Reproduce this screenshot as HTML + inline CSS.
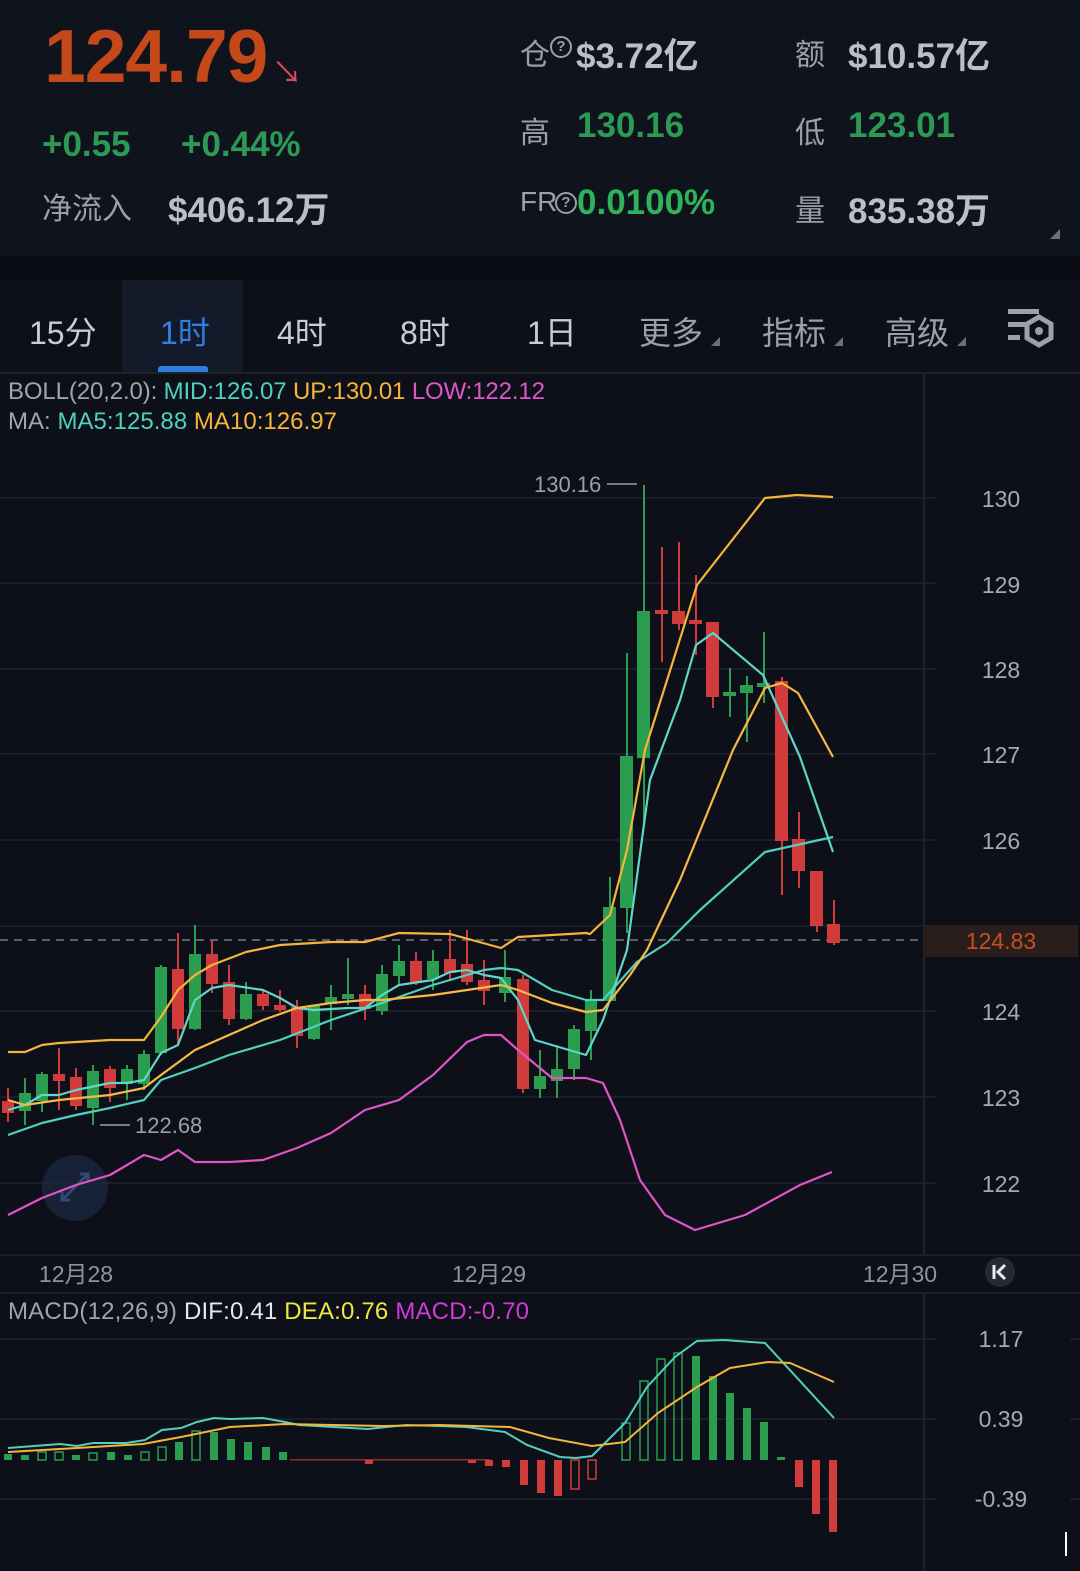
<!DOCTYPE html>
<html><head><meta charset="utf-8"><style>
*{margin:0;padding:0;box-sizing:border-box}
body{width:1080px;height:1571px;background:#0d1018;overflow:hidden;font-family:"Liberation Sans","Noto Sans CJK SC",sans-serif;position:relative}
.a{position:absolute;white-space:nowrap}
.b{font-weight:bold}
.g{color:#2c9a55}
.l{color:#9aa0aa}
.w{color:#b9c0cc}
</style></head><body>
<div class="a" style="left:0;top:0;width:1080px;height:256px;background:#0f131c"></div>
<div class="a" style="left:0;top:256px;width:1080px;height:24px;background:#0a0d13"></div>
<div class="a b" style="left:44px;top:13px;font-size:75px;color:#c4481a;letter-spacing:-1px">124.79</div>
<div class="a" style="left:272px;top:48px;font-size:30px;color:#d84a5a">↘</div>
<div class="a b g" style="left:42px;top:125px;font-size:35px">+0.55</div>
<div class="a b g" style="left:181px;top:125px;font-size:35px">+0.44%</div>
<div class="a l" style="left:42px;top:184px;font-size:30px">净流入</div>
<div class="a b w" style="left:168px;top:182px;font-size:35px">$406.12万</div>

<div class="a l" style="left:520px;top:30px;font-size:30px">仓</div>
<div class="a l" style="left:550px;top:36px;width:22px;height:22px;border:2px solid #9aa0aa;border-radius:50%;font-size:15px;text-align:center;line-height:18px;font-weight:bold">?</div>
<div class="a b w" style="left:576px;top:28px;font-size:35px">$3.72亿</div>
<div class="a l" style="left:795px;top:30px;font-size:30px">额</div>
<div class="a b w" style="left:848px;top:28px;font-size:35px">$10.57亿</div>
<div class="a l" style="left:520px;top:108px;font-size:30px">高</div>
<div class="a b g" style="left:577px;top:106px;font-size:35px">130.16</div>
<div class="a l" style="left:795px;top:108px;font-size:30px">低</div>
<div class="a b g" style="left:848px;top:106px;font-size:35px">123.01</div>
<div class="a l" style="left:520px;top:186px;font-size:28px">FR</div>
<div class="a l" style="left:555px;top:192px;width:22px;height:22px;border:2px solid #9aa0aa;border-radius:50%;font-size:15px;text-align:center;line-height:18px;font-weight:bold">?</div>
<div class="a b" style="left:577px;top:183px;font-size:35px;color:#2fb35a">0.0100%</div>
<div class="a l" style="left:795px;top:186px;font-size:30px">量</div>
<div class="a b w" style="left:848px;top:183px;font-size:35px">835.38万</div>
<div class="a" style="left:1050px;top:229px;width:0;height:0;border-left:10px solid transparent;border-bottom:10px solid #6a707a"></div>

<div class="a" style="left:122px;top:280px;width:121px;height:92px;background:#131b2a"></div>
<div class="a" style="left:158px;top:366px;width:50px;height:6px;background:#2f7ee0;border-radius:3px 3px 0 0"></div>
<div class="a" style="left:29px;top:308px;font-size:32px;color:#c8ccd3">15分</div>
<div class="a" style="left:160px;top:308px;font-size:32px;color:#2f7ee0">1时</div>
<div class="a" style="left:277px;top:308px;font-size:32px;color:#c8ccd3">4时</div>
<div class="a" style="left:400px;top:308px;font-size:32px;color:#c8ccd3">8时</div>
<div class="a" style="left:527px;top:308px;font-size:32px;color:#c8ccd3">1日</div>
<div class="a" style="left:639px;top:308px;font-size:32px;color:#9aa0aa">更多</div>
<div class="a" style="left:762px;top:308px;font-size:32px;color:#9aa0aa">指标</div>
<div class="a" style="left:885px;top:308px;font-size:32px;color:#9aa0aa">高级</div>
<div class="a" style="left:711px;top:337px;border-left:9px solid transparent;border-bottom:9px solid #6a707a"></div>
<div class="a" style="left:834px;top:337px;border-left:9px solid transparent;border-bottom:9px solid #6a707a"></div>
<div class="a" style="left:957px;top:337px;border-left:9px solid transparent;border-bottom:9px solid #6a707a"></div>
<svg class="a" style="left:0;top:0" width="1080" height="1571">
<g fill="#9aa1ad"><rect x="1008" y="309" width="31" height="5"/><rect x="1008" y="322" width="17" height="5"/><rect x="1008" y="335" width="12" height="5"/></g>
<polygon points="1039,317 1051,324 1051,338 1039,345 1027,338 1027,324" fill="none" stroke="#9aa1ad" stroke-width="5"/>
<circle cx="1039" cy="331" r="4" fill="#9aa1ad"/>
<line x1="0" y1="373" x2="1080" y2="373" stroke="#1c212b" stroke-width="2"/>
<line x1="924" y1="373" x2="924" y2="1255" stroke="#1c212b" stroke-width="2"/>
<line x1="924" y1="1293" x2="924" y2="1571" stroke="#1c212b" stroke-width="2"/>
<g stroke="#1e232d" stroke-width="1.5">
<line x1="0" y1="498" x2="936" y2="498"/><line x1="0" y1="583" x2="936" y2="583"/><line x1="0" y1="669" x2="936" y2="669"/><line x1="0" y1="754" x2="936" y2="754"/><line x1="0" y1="840" x2="936" y2="840"/><line x1="0" y1="926" x2="936" y2="926"/><line x1="0" y1="1011" x2="936" y2="1011"/><line x1="0" y1="1097" x2="936" y2="1097"/><line x1="0" y1="1183" x2="936" y2="1183"/>
<line x1="0" y1="1255" x2="1080" y2="1255"/><line x1="0" y1="1293" x2="1080" y2="1293"/>
<line x1="0" y1="1339" x2="936" y2="1339"/><line x1="0" y1="1419" x2="936" y2="1419"/><line x1="0" y1="1499" x2="936" y2="1499"/>
<line x1="1070" y1="1339" x2="1080" y2="1339"/><line x1="1070" y1="1419" x2="1080" y2="1419"/><line x1="1070" y1="1499" x2="1080" y2="1499"/>
</g>
<line x1="0" y1="940" x2="924" y2="940" stroke="#5a5f68" stroke-width="2" stroke-dasharray="8,6"/>
<g font-family="Liberation Sans,sans-serif" font-size="23" fill="#a5aab3" text-anchor="middle">
<text x="1001" y="507">130</text><text x="1001" y="593">129</text><text x="1001" y="678">128</text><text x="1001" y="763">127</text><text x="1001" y="849">126</text><text x="1001" y="1020">124</text><text x="1001" y="1106">123</text><text x="1001" y="1192">122</text>
<text x="1001" y="1347">1.17</text><text x="1001" y="1427">0.39</text><text x="1001" y="1507">-0.39</text>
</g>
<rect x="924" y="925" width="154" height="32" fill="#2a1e1c"/>
<text x="1001" y="949" font-family="Liberation Sans,sans-serif" font-size="23" fill="#c4501f" text-anchor="middle">124.83</text>
<g font-family="Liberation Sans,Noto Sans CJK SC,sans-serif" font-size="23" fill="#8e949e" text-anchor="middle">
<text x="76" y="1282">12月28</text><text x="489" y="1282">12月29</text><text x="900" y="1282">12月30</text></g>
<circle cx="1000" cy="1272" r="15" fill="#252a35"/>
<path d="M994 1265v14M1005 1265l-7 7 7 7" stroke="#e8eaee" stroke-width="3" fill="none"/>
<text x="534" y="492" font-family="Liberation Sans,sans-serif" font-size="22" fill="#9aa0aa">130.16</text>
<line x1="607" y1="484" x2="637" y2="484" stroke="#9aa0aa" stroke-width="1.5"/>
<text x="135" y="1133" font-family="Liberation Sans,sans-serif" font-size="22" fill="#9aa0aa">122.68</text>
<line x1="100" y1="1125" x2="130" y2="1125" stroke="#9aa0aa" stroke-width="1.5"/>
<circle cx="75" cy="1188" r="33" fill="#1b2740" opacity="0.8"/>
<path d="M62 1200l26-26M80 1174h8v8M70 1200h-8v-8" stroke="#2d4a78" stroke-width="3" fill="none"/>

<g stroke="#d23b3b" fill="#d23b3b" stroke-width="2">
<line x1="8" y1="1088" x2="8" y2="1122"/><rect x="3" y="1102" width="10" height="10"/>
<line x1="59" y1="1048" x2="59" y2="1110"/><rect x="54" y="1075" width="10" height="5"/>
<line x1="76" y1="1068" x2="76" y2="1110"/><rect x="71" y="1078" width="10" height="27"/>
<line x1="110" y1="1066" x2="110" y2="1102"/><rect x="105" y="1070" width="10" height="17"/>
<line x1="178" y1="933" x2="178" y2="1045"/><rect x="173" y="970" width="10" height="58"/>
<line x1="212" y1="940" x2="212" y2="993"/><rect x="207" y="955" width="10" height="28"/>
<line x1="229" y1="965" x2="229" y2="1025"/><rect x="224" y="983" width="10" height="35"/>
<line x1="263" y1="990" x2="263" y2="1010"/><rect x="258" y="995" width="10" height="10"/>
<line x1="280" y1="990" x2="280" y2="1012"/><rect x="275" y="1006" width="10" height="3"/>
<line x1="297" y1="1000" x2="297" y2="1048"/><rect x="292" y="1008" width="10" height="27"/>
<line x1="365" y1="985" x2="365" y2="1020"/><rect x="360" y="995" width="10" height="13"/>
<line x1="416" y1="952" x2="416" y2="985"/><rect x="411" y="962" width="10" height="20"/>
<line x1="450" y1="930" x2="450" y2="980"/><rect x="445" y="960" width="10" height="12"/>
<line x1="467" y1="930" x2="467" y2="985"/><rect x="462" y="965" width="10" height="16"/>
<line x1="484" y1="960" x2="484" y2="1005"/><rect x="479" y="981" width="10" height="9"/>
<line x1="523" y1="975" x2="523" y2="1093"/><rect x="518" y="980" width="10" height="108"/>
<line x1="662" y1="547" x2="662" y2="662"/><rect x="656" y="611" width="11" height="2"/>
<line x1="679" y1="542" x2="679" y2="630"/><rect x="673" y="612" width="11" height="11"/>
<line x1="696" y1="575" x2="696" y2="655"/><rect x="690" y="621" width="11" height="2"/>
<line x1="713" y1="623" x2="713" y2="708"/><rect x="707" y="623" width="11" height="73"/>
<line x1="782" y1="677" x2="782" y2="895"/><rect x="776" y="682" width="11" height="158"/>
<line x1="799" y1="812" x2="799" y2="888"/><rect x="793" y="840" width="11" height="30"/>
<line x1="817" y1="872" x2="817" y2="932"/><rect x="811" y="872" width="11" height="53"/>
<line x1="834" y1="900" x2="834" y2="945"/><rect x="828" y="925" width="11" height="17"/>
</g>
<g stroke="#2a9d4e" fill="#2a9d4e" stroke-width="2">
<line x1="25" y1="1078" x2="25" y2="1125"/><rect x="20" y="1094" width="10" height="16"/>
<line x1="42" y1="1072" x2="42" y2="1112"/><rect x="37" y="1075" width="10" height="25"/>
<line x1="93" y1="1065" x2="93" y2="1125"/><rect x="88" y="1072" width="10" height="35"/>
<line x1="127" y1="1065" x2="127" y2="1100"/><rect x="122" y="1070" width="10" height="13"/>
<line x1="144" y1="1050" x2="144" y2="1090"/><rect x="139" y="1055" width="10" height="28"/>
<line x1="161" y1="965" x2="161" y2="1055"/><rect x="156" y="968" width="10" height="84"/>
<line x1="195" y1="925" x2="195" y2="1030"/><rect x="190" y="955" width="10" height="73"/>
<line x1="246" y1="982" x2="246" y2="1020"/><rect x="241" y="995" width="10" height="23"/>
<line x1="314" y1="1005" x2="314" y2="1040"/><rect x="309" y="1007" width="10" height="31"/>
<line x1="331" y1="985" x2="331" y2="1030"/><rect x="326" y="998" width="10" height="5"/>
<line x1="348" y1="958" x2="348" y2="1005"/><rect x="343" y="995" width="10" height="3"/>
<line x1="382" y1="965" x2="382" y2="1015"/><rect x="377" y="975" width="10" height="35"/>
<line x1="399" y1="945" x2="399" y2="985"/><rect x="394" y="962" width="10" height="13"/>
<line x1="433" y1="950" x2="433" y2="990"/><rect x="428" y="962" width="10" height="16"/>
<line x1="505" y1="950" x2="505" y2="1002"/><rect x="500" y="978" width="10" height="14"/>
<line x1="540" y1="1050" x2="540" y2="1098"/><rect x="535" y="1077" width="10" height="11"/>
<line x1="557" y1="1047" x2="557" y2="1098"/><rect x="552" y="1070" width="10" height="10"/>
<line x1="574" y1="1025" x2="574" y2="1080"/><rect x="569" y="1030" width="10" height="38"/>
<line x1="591" y1="990" x2="591" y2="1060"/><rect x="586" y="1000" width="10" height="30"/>
<line x1="610" y1="877" x2="610" y2="1002"/><rect x="604" y="908" width="11" height="92"/>
<line x1="627" y1="653" x2="627" y2="933"/><rect x="621" y="757" width="11" height="150"/>
<line x1="644" y1="485" x2="644" y2="826"/><rect x="638" y="612" width="11" height="145"/>
<line x1="730" y1="668" x2="730" y2="717"/><rect x="724" y="693" width="11" height="2"/>
<line x1="747" y1="676" x2="747" y2="742"/><rect x="741" y="686" width="11" height="6"/>
<line x1="764" y1="632" x2="764" y2="703"/><rect x="758" y="684" width="11" height="2"/>
</g>
<g fill="none" stroke-width="2.2" stroke-linejoin="round">
<polyline stroke="#f5b53a" points="8,1052 25,1052 42,1045 59,1043 110,1040 144,1040 161,1017 178,990 195,975 212,965 246,952 280,945 331,942 365,942 399,933 450,934 501,948 518,937 586,933 590,934 610,915 627,850 645,750 697,585 765,498 797,495 833,497"/>
<polyline stroke="#4fd1c0" points="8,1135 42,1123 76,1115 110,1108 144,1100 161,1080 195,1068 229,1055 280,1040 331,1020 382,1003 433,985 484,970 501,968 518,970 552,990 586,1000 603,1000 637,962 667,943 700,910 765,852 833,837"/>
<polyline stroke="#e055c8" points="8,1215 42,1198 76,1185 110,1175 144,1155 161,1160 178,1150 195,1162 229,1162 263,1160 297,1148 331,1133 365,1110 399,1100 433,1075 467,1042 484,1035 501,1035 518,1050 552,1078 586,1078 603,1083 620,1120 640,1180 665,1215 695,1230 745,1215 800,1185 832,1172"/>
<polyline stroke="#5fd6c8" points="8,1110 25,1105 42,1095 59,1095 76,1090 110,1083 127,1083 144,1080 161,1053 178,1045 195,1000 212,988 229,985 263,990 280,998 297,1008 314,1010 348,1008 365,1008 382,995 399,985 433,980 450,972 467,970 484,975 501,978 518,1000 535,1040 552,1045 569,1050 586,1055 603,1020 627,950 650,780 680,700 696,645 713,633 763,675 800,757 833,852"/>
<polyline stroke="#f7b945" points="8,1100 25,1105 59,1100 110,1095 144,1088 161,1075 195,1050 229,1035 263,1020 297,1008 331,1003 365,1000 382,1000 433,995 467,990 501,985 518,990 552,1003 586,1012 603,1010 630,975 647,950 680,880 733,750 765,688 782,683 798,693 833,757"/>
</g>
<g font-family="Liberation Sans,sans-serif" font-size="24">
<text x="8" y="399" fill="#a0a4ac" textLength="537">BOLL(20,2.0): <tspan fill="#4fd1c0">MID:126.07</tspan> <tspan fill="#f5b53a">UP:130.01</tspan> <tspan fill="#e055c8">LOW:122.12</tspan></text>
<text x="8" y="429" fill="#a0a4ac" textLength="329">MA: <tspan fill="#4fd1c0">MA5:125.88</tspan> <tspan fill="#f5b53a">MA10:126.97</tspan></text>
<text x="8" y="1319" fill="#a0a4ac" textLength="521">MACD(12,26,9) <tspan fill="#e6e8ec">DIF:0.41</tspan> <tspan fill="#f0e640">DEA:0.76</tspan> <tspan fill="#d23ad8">MACD:-0.70</tspan></text>
</g>
<g fill="#2a9d4e">
<rect x="4" y="1454" width="8" height="6"/><rect x="21" y="1455" width="8" height="5"/><rect x="72" y="1455" width="8" height="5"/><rect x="107" y="1452" width="8" height="8"/><rect x="124" y="1455" width="8" height="5"/>
<rect x="175" y="1442" width="8" height="18"/><rect x="210" y="1432" width="8" height="28"/><rect x="227" y="1439" width="8" height="21"/><rect x="244" y="1442" width="8" height="18"/><rect x="262" y="1447" width="8" height="13"/><rect x="279" y="1452" width="8" height="8"/>
<rect x="692" y="1356" width="8" height="104"/><rect x="709" y="1376" width="8" height="84"/><rect x="726" y="1393" width="8" height="67"/><rect x="743" y="1408" width="8" height="52"/><rect x="760" y="1422" width="8" height="38"/><rect x="777" y="1457" width="8" height="3"/>
</g>
<g fill="none" stroke="#2a9d4e" stroke-width="1.5">
<rect x="38" y="1452" width="8" height="8"/><rect x="55" y="1452" width="8" height="8"/><rect x="89" y="1453" width="8" height="7"/><rect x="141" y="1452" width="8" height="8"/><rect x="158" y="1447" width="8" height="13"/><rect x="192" y="1431" width="8" height="29"/>
<rect x="622" y="1423" width="8" height="37"/><rect x="640" y="1381" width="8" height="79"/><rect x="657" y="1359" width="8" height="101"/><rect x="674" y="1353" width="8" height="107"/>
</g>
<g fill="#d23b3b">
<rect x="290" y="1459" width="200" height="1.5" opacity="0.7"/><rect x="365" y="1460" width="8" height="4"/><rect x="468" y="1460" width="8" height="3"/><rect x="485" y="1460" width="8" height="6"/><rect x="502" y="1460" width="8" height="7"/>
<rect x="520" y="1460" width="8" height="25"/><rect x="537" y="1460" width="8" height="33"/><rect x="554" y="1460" width="8" height="36"/>
<rect x="795" y="1460" width="8" height="27"/><rect x="812" y="1460" width="8" height="54"/><rect x="829" y="1460" width="8" height="72"/>
</g>
<g fill="none" stroke="#d23b3b" stroke-width="1.5"><rect x="571" y="1460" width="8" height="29"/><rect x="588" y="1460" width="8" height="19"/></g>
<g fill="none" stroke-width="2">
<polyline stroke="#4fd1c0" points="8,1448 60,1444 77,1446 93,1443 126,1443 145,1440 162,1430 181,1428 197,1422 214,1418 230,1419 263,1418 285,1422 299,1425 368,1429 406,1425 439,1426 466,1427 505,1432 527,1445 560,1457 576,1458 592,1456 625,1423 647,1387 675,1357 697,1341 724,1340 765,1343 834,1418"/>
<polyline stroke="#f5b53a" points="8,1452 77,1448 143,1444 181,1437 230,1427 285,1424 384,1426 439,1425 510,1427 549,1438 592,1446 625,1442 658,1413 697,1387 730,1368 768,1362 790,1363 834,1382"/>
</g>
<line x1="1066" y1="1532" x2="1066" y2="1556" stroke="#fff" stroke-width="2"/>
</svg>
</body></html>
